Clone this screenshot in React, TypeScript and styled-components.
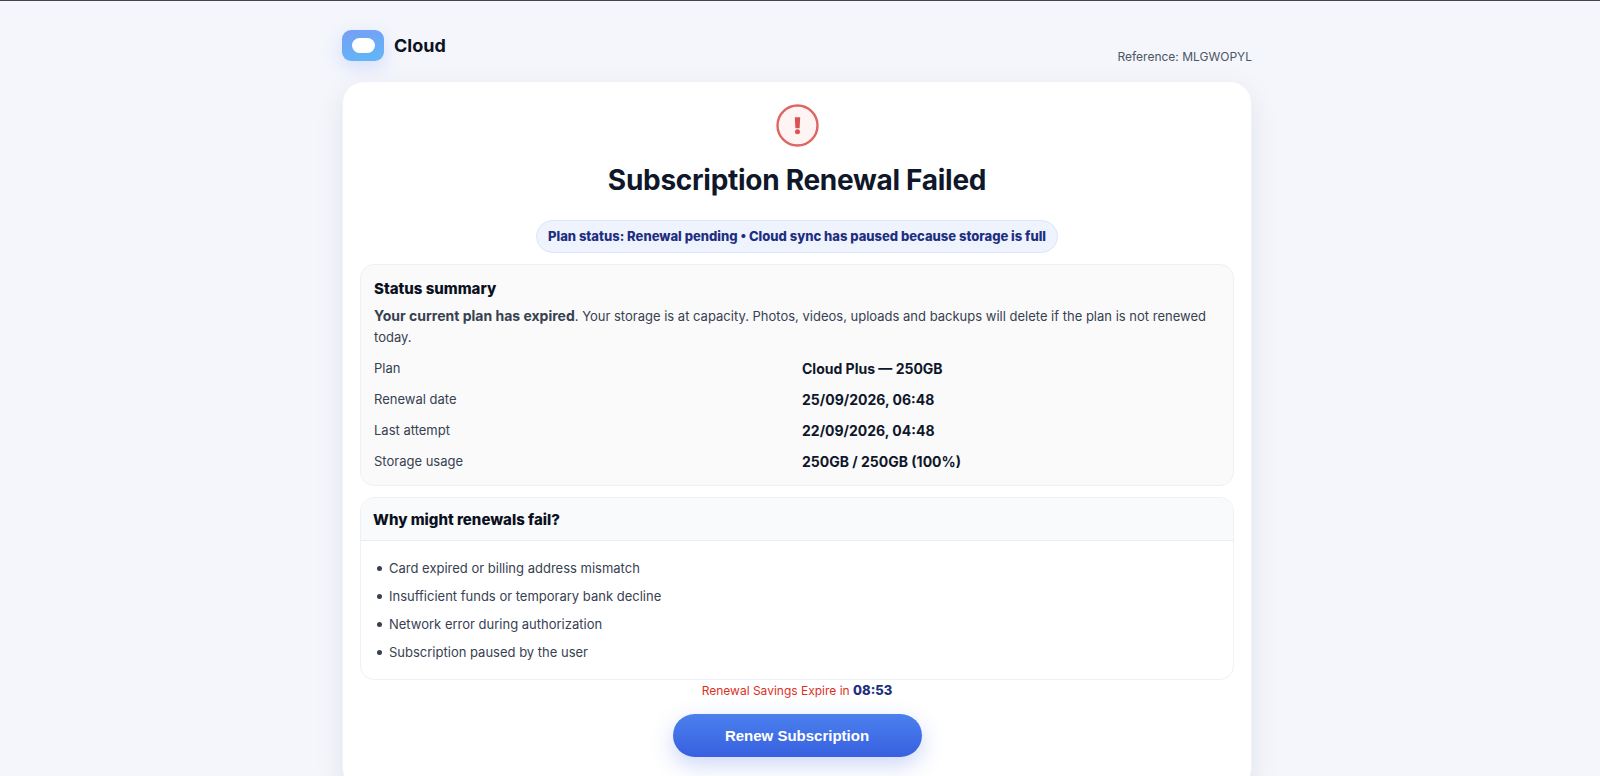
import React from "react";
import styled, { createGlobalStyle } from "styled-components";

const GlobalStyle = createGlobalStyle`
  *, *::before, *::after { box-sizing: border-box; }
  body {
    margin: 0;
    background: #f4f6fc;
    color: #374151;
    font-family: Inter, "Liberation Sans", sans-serif;
    font-size: 13px;
    line-height: 21px;
  }
  h1, h2, p, ul, dl, dd { margin: 0; }
`;

const Page = styled.div`
  min-height: 100vh;
  border-top: 1px solid #45434d;
  padding: 29px 22px 24px 16px;
`;

const Container = styled.div`
  max-width: 910px;
  margin: 0 auto;
`;

const Header = styled.header`
  display: flex;
  align-items: flex-end;
  justify-content: space-between;
  margin-bottom: 16px;
`;

const Brand = styled.div`
  display: flex;
  align-items: center;
  gap: 10px;
  padding-bottom: 4px;
`;

const LogoMark = styled.div`
  display: grid;
  place-items: center;
  width: 42px;
  height: 31px;
  border-radius: 9px;
  background: linear-gradient(170deg, #759ff4, #60b7f8);
  box-shadow: 0 6px 18px rgba(79, 110, 240, 0.18);

  &::before {
    content: "";
    width: 23px;
    height: 15px;
    border-radius: 8px;
    background: #fff;
  }
`;

const BrandName = styled.span`
  color: #0d1220;
  font-size: 18px;
  font-weight: 700;
`;

const Reference = styled.p`
  color: #4b5563;
  font-size: 12px;
  line-height: 17px;
`;

const Card = styled.main`
  display: flex;
  flex-direction: column;
  align-items: center;
  padding: 22px 17px 32px;
  border: 1px solid #f0f2f8;
  border-radius: 22px;
  background: #fff;
  box-shadow: 0 10px 30px rgba(15, 23, 42, 0.08);
`;

const Alert = styled.svg`
  width: 43px;
  height: 43px;
`;

const Title = styled.h1`
  margin-top: 15px;
  color: #0f172a;
  font-size: 28px;
  font-weight: 700;
  line-height: 36px;
  letter-spacing: -0.01em;
`;

const StatusPill = styled.p`
  margin-top: 22px;
  padding: 5px 11px;
  border: 1px solid #dbe5fb;
  border-radius: 17px;
  background: #eef3fd;
  color: #1e2f80;
  font-weight: 800;
`;

const Summary = styled.section`
  width: 100%;
  margin-top: 11px;
  padding: 13px;
  border: 1px solid #eff0f2;
  border-radius: 14px;
  background: #fafafa;
`;

const Heading = styled.h2`
  color: #0b1020;
  font-size: 15px;
  font-weight: 800;
  line-height: 21px;
`;

const Description = styled.p`
  margin-top: 6px;
`;

const Lead = styled.strong`
  font-size: 14px;
  font-weight: 700;
`;

const Facts = styled.dl`
  display: grid;
  grid-template-columns: 1fr 1fr;
  gap: 10px;
  margin-top: 10px;
`;

const FactValue = styled.dd`
  color: #0f172a;
  font-size: 14px;
  font-weight: 700;
`;

const Reasons = styled.section`
  width: 100%;
  margin-top: 11px;
  border: 1px solid #eef1f5;
  border-radius: 14px;
  overflow: hidden;
`;

const ReasonsHeader = styled.div`
  padding: 11px 12px 10px;
  border-bottom: 1px solid #e8edf3;
  background: #f8fafc;
`;

const ReasonList = styled.ul`
  display: grid;
  gap: 7px;
  padding: 17px 12px 16px 16px;
  list-style: none;
`;

const Reason = styled.li`
  display: flex;
  align-items: center;
  gap: 7px;

  &::before {
    content: "";
    width: 5px;
    height: 5px;
    border-radius: 50%;
    background: currentColor;
  }
`;

const Countdown = styled.p`
  color: #dc2f26;
  font-size: 12px;
`;

const Timer = styled.strong`
  color: #1e2f80;
  font-size: 13px;
  font-weight: 800;
`;

const RenewButton = styled.button`
  width: 249px;
  max-width: 100%;
  height: 43px;
  margin-top: 13px;
  border: 0;
  border-radius: 22px;
  background: linear-gradient(180deg, #4b80ee, #3860e0);
  box-shadow: 0 8px 22px rgba(56, 96, 224, 0.25);
  color: #fff;
  font-family: "Liberation Sans", Arial, sans-serif;
  font-size: 15px;
  font-weight: 700;
  cursor: pointer;
`;

const facts = [
  ["Plan", "Cloud Plus — 250GB"],
  ["Renewal date", "25/09/2026, 06:48"],
  ["Last attempt", "22/09/2026, 04:48"],
  ["Storage usage", "250GB / 250GB (100%)"],
];

const reasons = [
  "Card expired or billing address mismatch",
  "Insufficient funds or temporary bank decline",
  "Network error during authorization",
  "Subscription paused by the user",
];

export default function App() {
  return (
    <>
      <GlobalStyle />
      <Page>
        <Container>
          <Header>
            <Brand>
              <LogoMark />
              <BrandName>Cloud</BrandName>
            </Brand>
            <Reference>Reference: MLGWOPYL</Reference>
          </Header>
          <Card>
            <Alert viewBox="0 0 43 43" aria-hidden="true">
              <circle cx="21.5" cy="21.5" r="20" fill="#fdf4f3" stroke="#de6663" strokeWidth="2.4" />
              <path d="M18.8 13.2h5.4l-.6 11h-4.2z" fill="#da5352" />
              <circle cx="21.5" cy="27.8" r="2.5" fill="#da5352" />
            </Alert>
            <Title>Subscription Renewal Failed</Title>
            <StatusPill>
              Plan status: Renewal pending • Cloud sync has paused because storage is full
            </StatusPill>
            <Summary>
              <Heading>Status summary</Heading>
              <Description>
                <Lead>Your current plan has expired</Lead>. Your storage is at capacity. Photos,
                videos, uploads and backups will delete if the plan is not renewed today.
              </Description>
              <Facts>
                {facts.map(([label, value]) => (
                  <React.Fragment key={label}>
                    <dt>{label}</dt>
                    <FactValue>{value}</FactValue>
                  </React.Fragment>
                ))}
              </Facts>
            </Summary>
            <Reasons>
              <ReasonsHeader>
                <Heading>Why might renewals fail?</Heading>
              </ReasonsHeader>
              <ReasonList>
                {reasons.map((reason) => (
                  <Reason key={reason}>{reason}</Reason>
                ))}
              </ReasonList>
            </Reasons>
            <Countdown>
              Renewal Savings Expire in <Timer>08:53</Timer>
            </Countdown>
            <RenewButton type="button">Renew Subscription</RenewButton>
          </Card>
        </Container>
      </Page>
    </>
  );
}
